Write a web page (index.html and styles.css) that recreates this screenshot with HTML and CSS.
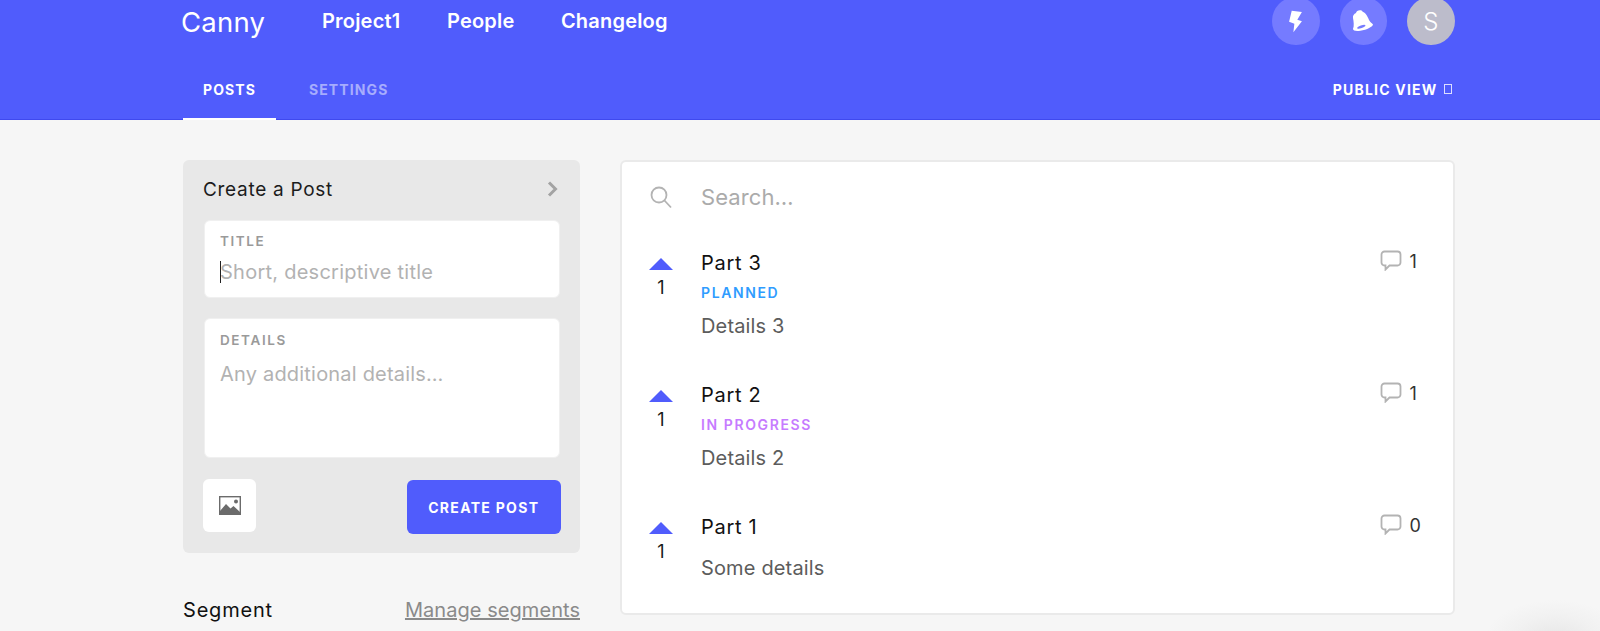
FILE: index.html
```html
<!DOCTYPE html>
<html lang="en">
<head>
<meta charset="utf-8">
<title>Canny</title>
<link rel="stylesheet" href="styles.css">
</head>
<body>
<header class="header">
  <div class="top-row">
    <div class="logo">Canny</div>
    <nav class="main-nav">
      <a>Project1</a>
      <a>People</a>
      <a>Changelog</a>
    </nav>
    <div class="circles">
      <div class="circle">
        <svg width="14" height="23" viewBox="147 30 42 70"><path d="M155 32L186 36L172 60L186 64L160 98L163 72L147 66Z" fill="#fff"/></svg>
      </div>
      <div class="circle">
        <svg width="22" height="23.500" viewBox="340 28 66 70"><path d="M352 40C352 32 368 28 372 36C385 42 388 55 392 62C395 68 400 70 403 74C403 80 385 90 365 93C352 95 343 93 343 88C347 80 345 65 343 55C342 48 346 42 352 40Z" fill="#fff"/><ellipse cx="368" cy="81" rx="13" ry="4" transform="rotate(-20 368 81)" fill="#757bff"/></svg>
      </div>
      <div class="circle avatar">S</div>
    </div>
  </div>
  <div class="tab-row">
    <a class="tab active">POSTS</a>
    <a class="tab">SETTINGS</a>
    <a class="public">PUBLIC VIEW <span class="box"></span></a>
  </div>
</header>

<main class="content">
  <aside class="side">
    <section class="create">
      <div class="create-head">
        <span>Create a Post</span>
        <svg width="12" height="16" viewBox="0 0 12 16"><path d="M2 1.500l6.500 6.500-6.500 6.500" fill="none" stroke="#a3a3a3" stroke-width="3"/></svg>
      </div>
      <div class="field field-title">
        <div class="label">TITLE</div>
        <div class="placeholder"><span class="caret"></span>Short, descriptive title</div>
      </div>
      <div class="field field-details">
        <div class="label">DETAILS</div>
        <div class="placeholder details-ph">Any additional details…</div>
      </div>
      <div class="actions">
        <div class="img-btn">
          <svg width="22" height="19" viewBox="0 0 22 19"><rect x="0.700" y="0.700" width="20.600" height="17.600" fill="#fff" stroke="#6b6b6b" stroke-width="1.400"/><path d="M1 18v-3l6-7 4.500 4.500 3-2.500L21 16v2z" fill="#6b6b6b"/><circle cx="17" cy="5.500" r="2" fill="#6b6b6b"/></svg>
        </div>
        <div class="create-btn">CREATE POST</div>
      </div>
    </section>
    <div class="segment">
      <span class="seg-title">Segment</span>
      <a class="seg-link">Manage segments</a>
    </div>
  </aside>

  <section class="card">
    <div class="search">
      <svg class="search-icon" width="24" height="24" viewBox="0 0 24 24"><circle cx="10" cy="10" r="7.500" fill="none" stroke="#b3b3b3" stroke-width="1.800"/><path d="M15.500 15.500L22 22.500" stroke="#b3b3b3" stroke-width="1.800"/></svg>
      <span>Search…</span>
    </div>

    <article class="post">
      <div class="vote"><span class="arrow"></span><span class="count">1</span></div>
      <div class="body">
        <div class="post-title">Part 3</div>
        <div class="status planned">PLANNED</div>
        <div class="details">Details 3</div>
      </div>
      <div class="comments">
        <svg width="22" height="21" viewBox="0 0 22 21"><path d="M4.500 1.500h13a3 3 0 0 1 3 3v8a3 3 0 0 1-3 3H9.500L5.500 19.500v-4h-1a3 3 0 0 1-3-3v-8a3 3 0 0 1 3-3z" fill="none" stroke="#b3b3b3" stroke-width="1.800"/></svg>
        <span>1</span>
      </div>
    </article>

    <article class="post">
      <div class="vote"><span class="arrow"></span><span class="count">1</span></div>
      <div class="body">
        <div class="post-title">Part 2</div>
        <div class="status progress">IN PROGRESS</div>
        <div class="details">Details 2</div>
      </div>
      <div class="comments">
        <svg width="22" height="21" viewBox="0 0 22 21"><path d="M4.500 1.500h13a3 3 0 0 1 3 3v8a3 3 0 0 1-3 3H9.500L5.500 19.500v-4h-1a3 3 0 0 1-3-3v-8a3 3 0 0 1 3-3z" fill="none" stroke="#b3b3b3" stroke-width="1.800"/></svg>
        <span>1</span>
      </div>
    </article>

    <article class="post last">
      <div class="vote"><span class="arrow"></span><span class="count">1</span></div>
      <div class="body">
        <div class="post-title">Part 1</div>
        <div class="details no-status">Some details</div>
      </div>
      <div class="comments">
        <svg width="22" height="21" viewBox="0 0 22 21"><path d="M4.500 1.500h13a3 3 0 0 1 3 3v8a3 3 0 0 1-3 3H9.500L5.500 19.500v-4h-1a3 3 0 0 1-3-3v-8a3 3 0 0 1 3-3z" fill="none" stroke="#b3b3b3" stroke-width="1.800"/></svg>
        <span>0</span>
      </div>
    </article>
  </section>
</main>
</body>
</html>
```
FILE: styles.css
```css
* { box-sizing: border-box; }

html, body {
  margin: 0;
  height: 631px;
  overflow: hidden;
}

body {
  font-family: Inter, "Liberation Sans", sans-serif;
  background-color: #f6f6f6;
  background-image: radial-gradient(ellipse 70px 40px at 1555px 640px, #e6e6e6 0%, #f1f1f1 60%, #f6f6f6 100%);
  background-repeat: no-repeat;
  color: #1a1a1a;
}

.header {
  height: 120px;
  background: #505cfc;
  border-bottom: 1px solid #3f49ef;
  padding: 0 145.500px 0 183px;
  color: #fff;
}

.top-row {
  display: flex;
  align-items: flex-start;
  height: 66px;
}

.logo {
  width: 141px;
  margin-top: 5px;
  margin-left: -2px;
  font-size: 27.500px;
  line-height: 34px;
  font-weight: 400;
  letter-spacing: 0.2px;
}

.main-nav {
  display: flex;
  gap: 46.500px;
  margin-top: 8px;
  font-size: 20px;
  line-height: 26px;
  font-weight: 600;
  letter-spacing: 0.2px;
}

.circles {
  display: flex;
  gap: 20px;
  margin-left: auto;
  margin-top: -3px;
}

.circle {
  width: 47.500px;
  height: 48px;
  border-radius: 50%;
  background: #757bff;
  display: flex;
  align-items: center;
  justify-content: center;
}

.avatar {
  background: #bcbccb;
  font-size: 24px;
  font-weight: 300;
}

.tab-row {
  display: flex;
  align-items: stretch;
  height: 53px;
  font-size: 14px;
  font-weight: 700;
  letter-spacing: 1.1px;
}

.tab {
  display: flex;
  align-items: center;
  padding: 0 20px 7px;
  color: rgba(255, 255, 255, 0.5);
  margin-right: 13px;
}

.tab.active {
  color: #fff;
  width: 93px;
  border-bottom: 2px solid #fff;
  margin-bottom: -1px;
  padding-bottom: 6px;
}

.public {
  margin-left: auto;
  display: flex;
  align-items: center;
  gap: 6px;
  padding-bottom: 7px;
  letter-spacing: 1.2px;
}

.box {
  width: 8px;
  height: 10px;
  border: 1px solid rgba(255, 255, 255, 0.8);
  margin-right: 3px;
}

.content {
  display: flex;
  align-items: flex-start;
  gap: 40px;
  padding: 40px 145.500px 0 183px;
}

.side {
  width: 397px;
  flex: none;
}

.create {
  height: 393px;
  background: #e8e8e8;
  border-radius: 6px;
  padding: 20px;
}

.create-head {
  display: flex;
  justify-content: space-between;
  align-items: center;
  height: 18px;
  font-size: 19px;
  font-weight: 400;
  letter-spacing: 0.7px;
  color: #1c1c1c;
  margin-bottom: 22px;
}

.create-head svg {
  margin-right: 1px;
}

.field {
  background: #fff;
  border-radius: 6px;
  border: 1px solid #f0f0f0;
  margin: 0 0 20px 1px;
  width: 356px;
  padding: 12px 15px 0;
}

.field-title { height: 78px; }
.field-details { height: 140px; margin-bottom: 21px; padding-top: 13px; }

.label {
  font-size: 13.500px;
  line-height: 16px;
  font-weight: 600;
  letter-spacing: 1.6px;
  color: #9a9a9a;
}

.placeholder {
  position: relative;
  margin-top: 10px;
  font-size: 20px;
  line-height: 26px;
  color: #b2b2b2;
  letter-spacing: 0.25px;
}

.details-ph { margin-top: 13px; letter-spacing: 0.2px; }

.caret {
  position: absolute;
  left: 0;
  top: 2px;
  width: 1px;
  height: 22px;
  background: #222;
}

.actions {
  display: flex;
  justify-content: space-between;
  align-items: flex-start;
}

.img-btn {
  width: 53px;
  height: 53px;
  background: #fff;
  border-radius: 6px;
  display: flex;
  align-items: center;
  justify-content: center;
}

.create-btn {
  width: 153.500px;
  height: 54px;
  margin-top: 1px;
  margin-right: -0.500px;
  background: #505cfc;
  border-radius: 6px;
  color: #fff;
  display: flex;
  align-items: center;
  justify-content: center;
  font-size: 14px;
  font-weight: 700;
  letter-spacing: 1.3px;
}

.segment {
  display: flex;
  justify-content: space-between;
  align-items: center;
  margin-top: 45px;
  height: 24px;
  font-size: 20px;
  letter-spacing: 0.8px;
}

.seg-title { font-weight: 400; color: #111; }
.seg-link { color: #8a8a8a; text-decoration: underline; letter-spacing: 0.05px; }

.card {
  flex: 1;
  height: 455px;
  background: #fff;
  border: 2px solid #eaeaea;
  border-radius: 6px;
}

.search {
  display: flex;
  align-items: center;
  height: 70px;
  padding-left: 27px;
  font-size: 22px;
  color: #ababab;
  letter-spacing: 0.1px;
}

.search-icon { margin-right: 28px; }

.post {
  display: flex;
  align-items: flex-start;
  height: 132px;
  padding: 18px 29px 0 0;
  color: #1a1a1a;
}

.vote {
  width: 79px;
  display: flex;
  flex-direction: column;
  align-items: center;
  padding-right: 1px;
  padding-top: 8px;
  flex: none;
}

.arrow {
  width: 24px;
  height: 12px;
  background: #505cfc;
  clip-path: polygon(50% 0, 100% 100%, 0 100%);
}

.count {
  margin-top: 6px;
  font-size: 18px;
  line-height: 24px;
}

.body { flex: 1; }

.post-title {
  font-size: 20px;
  line-height: 26px;
  font-weight: 400;
  letter-spacing: 0.7px;
  color: #111;
}

.status {
  margin-top: 9px;
  font-size: 14px;
  line-height: 16px;
  font-weight: 600;
  letter-spacing: 1.6px;
}

.planned { color: #2f9cff; }
.progress { color: #c67bff; }

.details {
  margin-top: 12px;
  font-size: 20px;
  line-height: 26px;
  color: #5c5c5c;
  letter-spacing: 0.15px;
}

.no-status { margin-top: 15px; }

.comments {
  display: flex;
  align-items: flex-start;
  gap: 8px;
  font-size: 18px;
  line-height: 24px;
  color: #333;
  width: 44px;
}
```
